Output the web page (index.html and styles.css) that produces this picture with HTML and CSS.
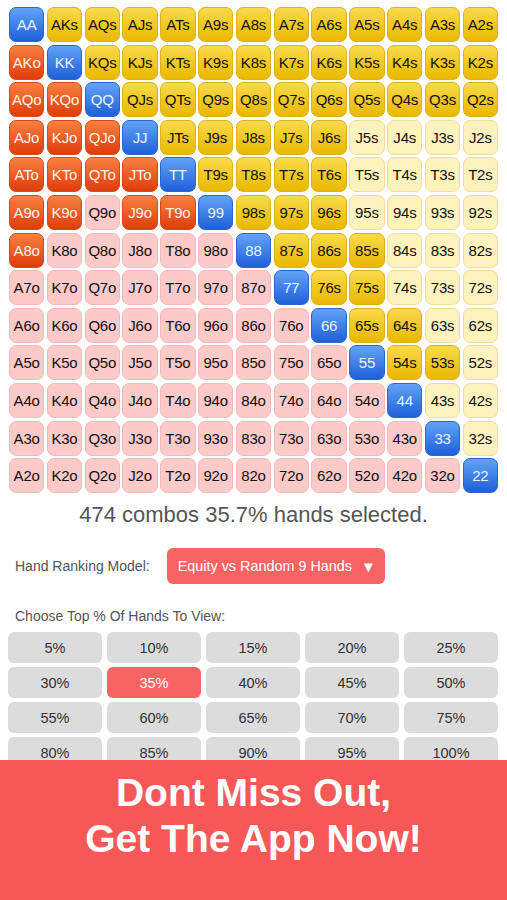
FILE: index.html
```html
<!DOCTYPE html>
<html>
<head>
<meta charset="utf-8">
<link rel="stylesheet" href="styles.css">
</head>
<body>
<div class="grid">
<div class="c p">AA</div><div class="c s">AKs</div><div class="c s">AQs</div><div class="c s">AJs</div><div class="c s">ATs</div><div class="c s">A9s</div><div class="c s">A8s</div><div class="c s">A7s</div><div class="c s">A6s</div><div class="c s">A5s</div><div class="c s">A4s</div><div class="c s">A3s</div><div class="c s">A2s</div>
<div class="c o">AKo</div><div class="c p">KK</div><div class="c s">KQs</div><div class="c s">KJs</div><div class="c s">KTs</div><div class="c s">K9s</div><div class="c s">K8s</div><div class="c s">K7s</div><div class="c s">K6s</div><div class="c s">K5s</div><div class="c s">K4s</div><div class="c s">K3s</div><div class="c s">K2s</div>
<div class="c o">AQo</div><div class="c o">KQo</div><div class="c p">QQ</div><div class="c s">QJs</div><div class="c s">QTs</div><div class="c s">Q9s</div><div class="c s">Q8s</div><div class="c s">Q7s</div><div class="c s">Q6s</div><div class="c s">Q5s</div><div class="c s">Q4s</div><div class="c s">Q3s</div><div class="c s">Q2s</div>
<div class="c o">AJo</div><div class="c o">KJo</div><div class="c o">QJo</div><div class="c p">JJ</div><div class="c s">JTs</div><div class="c s">J9s</div><div class="c s">J8s</div><div class="c s">J7s</div><div class="c s">J6s</div><div class="c su">J5s</div><div class="c su">J4s</div><div class="c su">J3s</div><div class="c su">J2s</div>
<div class="c o">ATo</div><div class="c o">KTo</div><div class="c o">QTo</div><div class="c o">JTo</div><div class="c p">TT</div><div class="c s">T9s</div><div class="c s">T8s</div><div class="c s">T7s</div><div class="c s">T6s</div><div class="c su">T5s</div><div class="c su">T4s</div><div class="c su">T3s</div><div class="c su">T2s</div>
<div class="c o">A9o</div><div class="c o">K9o</div><div class="c ou">Q9o</div><div class="c o">J9o</div><div class="c o">T9o</div><div class="c p">99</div><div class="c s">98s</div><div class="c s">97s</div><div class="c s">96s</div><div class="c su">95s</div><div class="c su">94s</div><div class="c su">93s</div><div class="c su">92s</div>
<div class="c o">A8o</div><div class="c ou">K8o</div><div class="c ou">Q8o</div><div class="c ou">J8o</div><div class="c ou">T8o</div><div class="c ou">98o</div><div class="c p">88</div><div class="c s">87s</div><div class="c s">86s</div><div class="c s">85s</div><div class="c su">84s</div><div class="c su">83s</div><div class="c su">82s</div>
<div class="c ou">A7o</div><div class="c ou">K7o</div><div class="c ou">Q7o</div><div class="c ou">J7o</div><div class="c ou">T7o</div><div class="c ou">97o</div><div class="c ou">87o</div><div class="c p">77</div><div class="c s">76s</div><div class="c s">75s</div><div class="c su">74s</div><div class="c su">73s</div><div class="c su">72s</div>
<div class="c ou">A6o</div><div class="c ou">K6o</div><div class="c ou">Q6o</div><div class="c ou">J6o</div><div class="c ou">T6o</div><div class="c ou">96o</div><div class="c ou">86o</div><div class="c ou">76o</div><div class="c p">66</div><div class="c s">65s</div><div class="c s">64s</div><div class="c su">63s</div><div class="c su">62s</div>
<div class="c ou">A5o</div><div class="c ou">K5o</div><div class="c ou">Q5o</div><div class="c ou">J5o</div><div class="c ou">T5o</div><div class="c ou">95o</div><div class="c ou">85o</div><div class="c ou">75o</div><div class="c ou">65o</div><div class="c p">55</div><div class="c s">54s</div><div class="c s">53s</div><div class="c su">52s</div>
<div class="c ou">A4o</div><div class="c ou">K4o</div><div class="c ou">Q4o</div><div class="c ou">J4o</div><div class="c ou">T4o</div><div class="c ou">94o</div><div class="c ou">84o</div><div class="c ou">74o</div><div class="c ou">64o</div><div class="c ou">54o</div><div class="c p">44</div><div class="c su">43s</div><div class="c su">42s</div>
<div class="c ou">A3o</div><div class="c ou">K3o</div><div class="c ou">Q3o</div><div class="c ou">J3o</div><div class="c ou">T3o</div><div class="c ou">93o</div><div class="c ou">83o</div><div class="c ou">73o</div><div class="c ou">63o</div><div class="c ou">53o</div><div class="c ou">43o</div><div class="c p">33</div><div class="c su">32s</div>
<div class="c ou">A2o</div><div class="c ou">K2o</div><div class="c ou">Q2o</div><div class="c ou">J2o</div><div class="c ou">T2o</div><div class="c ou">92o</div><div class="c ou">82o</div><div class="c ou">72o</div><div class="c ou">62o</div><div class="c ou">52o</div><div class="c ou">42o</div><div class="c ou">32o</div><div class="c p">22</div>
</div>
<div class="summary">474 combos 35.7% hands selected.</div>
<div class="model-row">
  <span class="label">Hand Ranking Model:</span>
  <div class="dropdown">Equity vs Random 9 Hands <span class="arrow">▼</span></div>
</div>
<div class="label choose">Choose Top % Of Hands To View:</div>
<div class="pct-grid">
  <div class="pct">5%</div><div class="pct">10%</div><div class="pct">15%</div><div class="pct">20%</div><div class="pct">25%</div>
  <div class="pct">30%</div><div class="pct sel">35%</div><div class="pct">40%</div><div class="pct">45%</div><div class="pct">50%</div>
  <div class="pct">55%</div><div class="pct">60%</div><div class="pct">65%</div><div class="pct">70%</div><div class="pct">75%</div>
  <div class="pct">80%</div><div class="pct">85%</div><div class="pct">90%</div><div class="pct">95%</div><div class="pct">100%</div>
</div>
<div class="banner">Dont Miss Out,<br>Get The App Now!</div>
</body>
</html>
```
FILE: styles.css
```css
html, body {
  margin: 0;
  padding: 0;
  background: #ffffff;
  font-family: "Liberation Sans", Arial, sans-serif;
  width: 507px;
  height: 900px;
  overflow: hidden;
}
.grid {
  display: grid;
  grid-template-columns: repeat(13, 1fr);
  grid-auto-rows: 35px;
  column-gap: 2.5px;
  row-gap: 2.6px;
  padding: 7px 9px 0 9px;
}
.c {
  border-radius: 7px;
  display: flex;
  align-items: center;
  justify-content: center;
  font-size: 15px;
  color: #111;
  box-sizing: border-box;
  letter-spacing: -0.2px;
}
.p {
  background: linear-gradient(#62a3f6, #1f5fd9);
  color: #eaf2ff;
  border: 1px solid #2b66cf;
}
.o {
  background: linear-gradient(#f9813f, #e03c0c);
  color: #fff3ec;
  border: 1px solid #d9481a;
}
.s {
  background: linear-gradient(#f9da4c, #e9b800);
  border: 1px solid #dcb21a;
}
.su {
  background: #fef3bd;
  border: 1px solid #f0dd9e;
}
.ou {
  background: #fdcaca;
  border: 1px solid #f6baba;
}
.summary {
  text-align: center;
  font-size: 22px;
  color: #555;
  margin-top: 9px;
}
.model-row {
  display: flex;
  align-items: center;
  margin-top: 20px;
  padding-left: 15px;
}
.label {
  font-size: 14px;
  color: #555;
}
.dropdown {
  margin-left: 17px;
  background: #f86464;
  color: #fff;
  border-radius: 6px;
  width: 218px;
  height: 36px;
  box-sizing: border-box;
  display: flex;
  align-items: center;
  padding-left: 11px;
  font-size: 14.4px;
}
.arrow {
  margin-left: 9px;
  font-size: 15px;
}
.choose {
  padding-left: 15px;
  margin-top: 24px;
}
.pct-grid {
  display: grid;
  grid-template-columns: repeat(5, 94px);
  grid-auto-rows: 31px;
  column-gap: 5px;
  row-gap: 4px;
  padding-left: 8px;
  margin-top: 8px;
}
.pct {
  background: #dcdcdc;
  border-radius: 6px;
  display: flex;
  align-items: center;
  justify-content: center;
  font-size: 14.5px;
  color: #333;
}
.pct.sel {
  background: #f86464;
  color: #fff;
}
.banner {
  position: fixed;
  left: 0;
  right: 0;
  bottom: 0;
  height: 140px;
  background: #f65858;
  color: #fff;
  font-weight: bold;
  font-size: 39px;
  line-height: 46px;
  text-align: center;
  padding-top: 10px;
  box-sizing: border-box;
}
```
